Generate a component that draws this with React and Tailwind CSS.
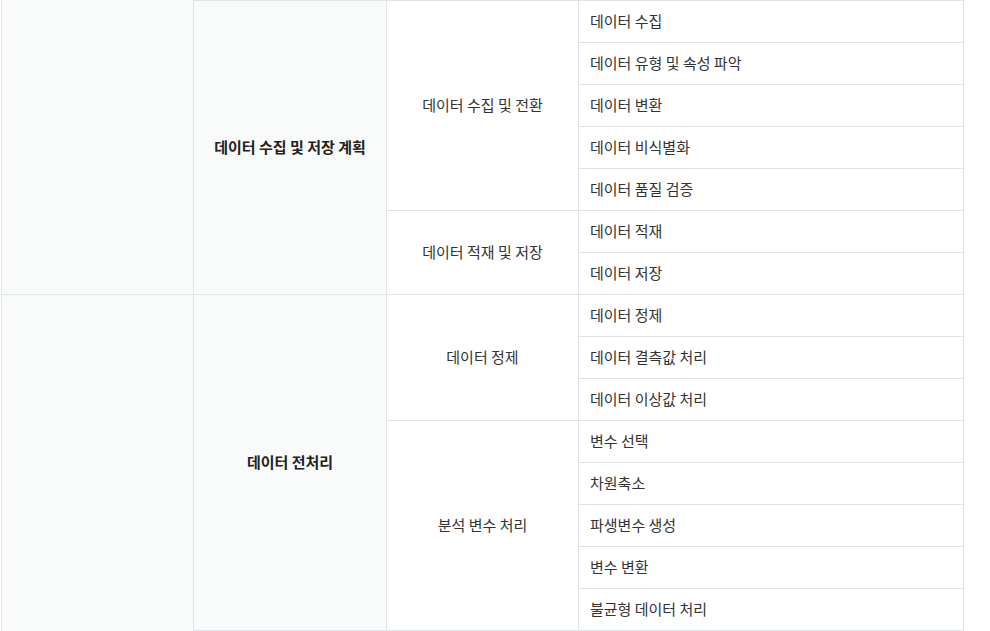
const sections = [
  {
    title: '데이터 수집 및 저장 계획',
    groups: [
      {
        name: '데이터 수집 및 전환',
        items: ['데이터 수집', '데이터 유형 및 속성 파악', '데이터 변환', '데이터 비식별화', '데이터 품질 검증'],
      },
      { name: '데이터 적재 및 저장', items: ['데이터 적재', '데이터 저장'] },
    ],
  },
  {
    title: '데이터 전처리',
    groups: [
      { name: '데이터 정제', items: ['데이터 정제', '데이터 결측값 처리', '데이터 이상값 처리'] },
      {
        name: '분석 변수 처리',
        items: ['변수 선택', '차원축소', '파생변수 생성', '변수 변환', '불균형 데이터 처리'],
      },
    ],
  },
];

export default function App() {
  return (
    <div
      className="w-[990px] h-[631px] overflow-hidden bg-white text-[15px] text-[#333]"
      style={{ fontFamily: '"Noto Sans CJK KR", "Noto Sans", sans-serif' }}
    >
      <div className="ml-px w-[963px]">
        {sections.map((sec, si) => (
          <div key={si} className="flex">
            {/* 대분류: 위쪽에서 이어지는 셀 */}
            <div
              className={`w-[192px] shrink-0 bg-[#f9fbfa] border-l border-[#e1e4e7] ${
                si === 0 ? '' : 'border-t'
              }`}
            />

            <div
              className={`flex-1 flex border-r border-[#e1e4e7] ${
                si === sections.length - 1 ? 'border-b' : ''
              }`}
            >
              <div className="w-[193px] shrink-0 flex items-center justify-center bg-[#f9fbfa] border-l border-t border-[#e1e4e7] font-bold text-[#222]">
                {sec.title}
              </div>

              <div className="flex-1 flex flex-col">
                {sec.groups.map((g, gi) => (
                  <div key={gi} className="flex">
                    <div className="w-[192px] shrink-0 flex items-center justify-center border-l border-t border-[#e1e4e7]">
                      {g.name}
                    </div>
                    <div className="flex-1 flex flex-col border-l border-[#e1e4e7]">
                      {g.items.map((it, ii) => (
                        <div
                          key={ii}
                          className="h-[42px] flex items-center pl-[11px] border-t border-[#e1e4e7]"
                        >
                          {it}
                        </div>
                      ))}
                    </div>
                  </div>
                ))}
              </div>
            </div>
          </div>
        ))}
      </div>
    </div>
  );
}
